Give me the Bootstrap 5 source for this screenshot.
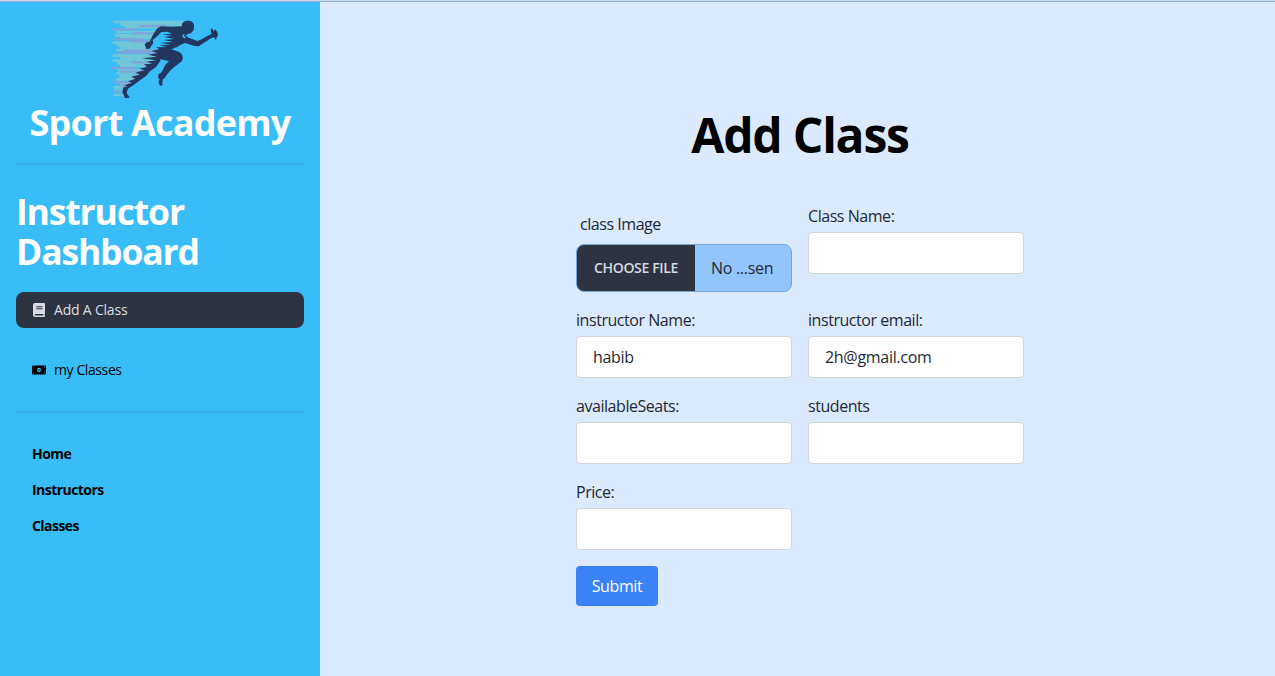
<!DOCTYPE html>
<html lang="en">
<head>
<meta charset="utf-8">
<meta name="viewport" content="width=device-width, initial-scale=1">
<title>Sport Academy</title>
<link href="https://cdn.jsdelivr.net/npm/bootstrap@5.3.0/dist/css/bootstrap.min.css" rel="stylesheet">
<style>
body{font-family:"Open Sans","Noto Sans",sans-serif;font-size:16px;line-height:24px;color:#1f2937;background:#dbeafe;height:100vh;overflow:hidden}
.topline{height:2px;background:#c5d6f0;border-bottom:1px solid #93aed2}
.sidebar{width:320px;background:#38bdf8;padding:8px 16px}
.brand-logo{margin-left:84px}
.brand-title,.dash-title{font-size:36px;line-height:40px;font-weight:700;color:#fff}
.brand-title{letter-spacing:-.8px;margin:-2px 0 20px;white-space:nowrap}
.dash-title{font-size:35.5px;letter-spacing:-1.15px;margin:26px 0 21px}
.rule{height:2px;background:#36aee5}
.rule-gap{margin:23px 0}
.side-link{font-size:14px;line-height:20px;padding:8px 16px;border-radius:8px;color:#000;text-decoration:none;gap:8px;letter-spacing:-.4px}
.side-link.current{background:#2d3340;color:#dadde3;letter-spacing:-.2px}
.side-link.strong{font-weight:700;letter-spacing:-.55px}
.page-title{font-size:48px;line-height:48px;font-weight:700;color:#000;letter-spacing:-1.2px;margin:109px 0 45px}
.main-area{padding-left:5px}
.class-form{width:448px}
.field-label{display:block;margin-bottom:4px;letter-spacing:-.45px}
.img-label{padding:8px 4px;margin:0}
.field{height:42px;padding:8px 16px;border:1px solid #d1d5db;border-radius:4px;color:#1f2937;letter-spacing:-.3px}
.file-box{height:48px;border:1px solid #76a3d8;border-radius:8px;background:#93c5fd;overflow:hidden;letter-spacing:-.3px}
.file-btn{width:118px;background:#2d3340;color:#d5d9e0;font-size:14px;font-weight:600;letter-spacing:-.35px}
.send{background:#3b82f6;color:#fff;border:0;border-radius:4px;width:82px;height:40px;padding:8px 0;line-height:24px;letter-spacing:-.4px}
.send:hover{background:#2563eb;color:#fff}
</style>
</head>
<body class="d-flex flex-column">
<div class="topline flex-shrink-0"></div>
<div class="d-flex flex-grow-1">
  <aside class="sidebar flex-shrink-0">
    <div class="text-center">
      <svg class="brand-logo d-block" width="130" height="95" viewBox="0 0 390 285" aria-hidden="true">
        <g fill="none" stroke-width="8" stroke="#70c6d6">
          <path d="M40 36H250M62 44H245M75 52H200M48 66H178M44 76H170M60 84H165M38 98H150M50 106H150M62 114H145M48 120H160M38 137H182M62 145H180M38 152H170M52 160H165M60 168H160M55 181H140M50 190H135M58 199H120M48 208H110M60 222H95M40 232H82M44 242H76M40 255H72"/>
        </g>
        <g fill="none" stroke-width="7" stroke="#7fa3dc">
          <path d="M118 48H200M38 58H115M100 70H175M42 88H130M90 94H150M70 122H180M50 128H190M95 157H165M36 174H105M60 185H130M100 197H128M38 217H95M60 227H85M42 245H72"/>
        </g>
        <g fill="#22375f">
          <path d="M263 32C276 31 284 40 282 52C282 64 274 72 262 72L258 77L266 83L292 93C304 89 318 80 334 72L332 58L337 55L340 64L345 58L351 65C355 72 354 80 350 82L348 91L342 82L334 84C320 92 305 103 296 109L284 108L255 99L241 105L230 112L214 118L238 126C248 133 251 143 246 153L222 172C208 184 201 193 195 203L188 209L187 226L180 227L175 216L179 207L174 203L176 192L185 187L195 166L207 153L180 148L181 153L168 171L148 185L139 197L117 213L101 225L84 236L80 249L89 263L75 264L67 247L70 232L82 230L73 226L96 218L84 214L106 206L94 200L120 194L106 188L133 181L119 176L140 170L132 163L157 161L140 155L168 151L126 145L170 140L145 134L173 129L154 123L178 118L169 112L200 111L177 105L213 104L180 98L220 96L190 90L222 87L192 81L215 77L187 73L216 71L202 65L184 66L173 77L158 91L160 98L149 116L139 117L134 103L141 96L149 95L158 76L172 55L183 49L214 50L246 49C244 39 252 32 263 32Z"/>
        </g>
        <path d="M246 76L254 71L252 79L259 81L252 86Z" fill="#38bdf8"/>
      </svg>
      <div class="brand-title">Sport Academy</div>
    </div>
    <div class="rule"></div>
    <h2 class="dash-title">Instructor Dashboard</h2>
    <nav>
      <a href="#" class="side-link current d-flex align-items-center">
        <svg width="14" height="14" viewBox="0 0 14 14"><path fill="#dadde3" fill-rule="evenodd" d="M3 0H12Q13 0 13 1V10.2Q13 10.8 12.6 11V12.6Q13 12.8 13 13.3Q13 14 12.3 14H3.2Q1 14 1 11.8V2Q1 0 3 0ZM3.5 11Q2.7 11 2.7 11.8Q2.7 12.4 3.5 12.4H11.2V11ZM4.3 3.2V4.2H10.5V3.2ZM4.3 5.2V6.2H10.5V5.2Z"/></svg>
        <span>Add A Class</span>
      </a>
      <a href="#" class="side-link d-flex align-items-center mt-4">
        <svg width="14" height="14" viewBox="0 0 14 14"><path fill="#000" fill-rule="evenodd" d="M1 2.5H13Q14 2.5 14 3.5V10.5Q14 11.5 13 11.5H1Q0 11.5 0 10.5V3.5Q0 2.5 1 2.5ZM1 3.5V4.7L2.2 3.5ZM13 3.5H11.8L13 4.7ZM1 10.5H2.2L1 9.3ZM13 10.5V9.3L11.8 10.5ZM7 4.8Q5.1 4.8 5.1 7T7 9.2Q8.9 9.2 8.9 7T7 4.8ZM6.6 5.9H7.4V8.1H6.6Z"/></svg>
        <span>my Classes</span>
      </a>
    </nav>
    <div class="rule rule-gap"></div>
    <nav>
      <a href="#" class="side-link strong d-block">Home</a>
      <a href="#" class="side-link strong d-block">Instructors</a>
      <a href="#" class="side-link strong d-block">Classes</a>
    </nav>
  </aside>
  <main class="main-area flex-grow-1 d-flex flex-column align-items-center">
    <h1 class="page-title">Add Class</h1>
    <form class="class-form">
      <div class="row g-3">
        <div class="col-6">
          <label class="field-label img-label">class Image</label>
          <div class="file-box d-flex">
            <div class="file-btn d-flex align-items-center justify-content-center">CHOOSE FILE</div>
            <div class="d-flex align-items-center ps-3">No ...sen</div>
          </div>
        </div>
        <div class="col-6"><label class="field-label">Class Name:</label><input class="field w-100 d-block bg-white" type="text"></div>
        <div class="col-6"><label class="field-label">instructor Name:</label><input class="field w-100 d-block bg-white" type="text" value="habib"></div>
        <div class="col-6"><label class="field-label">instructor email:</label><input class="field w-100 d-block bg-white" type="text" value="2h@gmail.com"></div>
        <div class="col-6"><label class="field-label">availableSeats:</label><input class="field w-100 d-block bg-white" type="text"></div>
        <div class="col-6"><label class="field-label">students</label><input class="field w-100 d-block bg-white" type="text"></div>
        <div class="col-6"><label class="field-label">Price:</label><input class="field w-100 d-block bg-white" type="text"></div>
      </div>
      <button type="button" class="btn send mt-3">Submit</button>
    </form>
  </main>
</div>
<script src="https://cdn.jsdelivr.net/npm/bootstrap@5.3.0/dist/js/bootstrap.bundle.min.js"></script>
</body>
</html>
